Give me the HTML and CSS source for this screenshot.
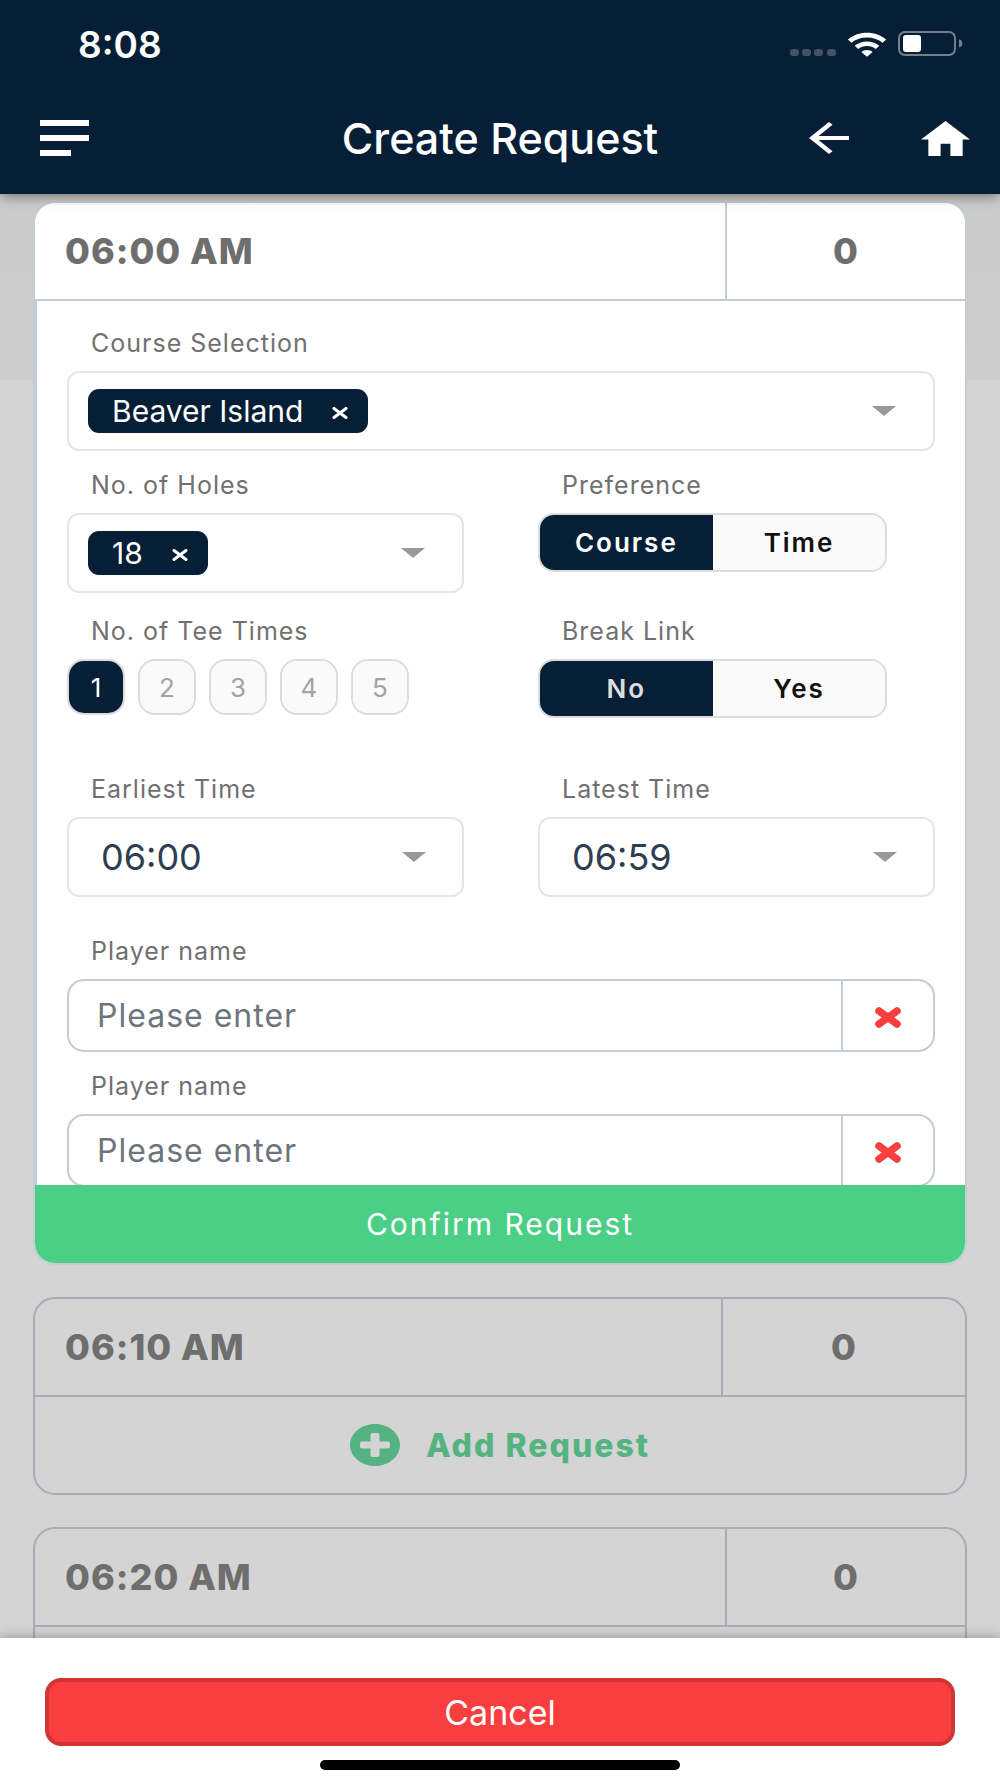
FILE: index.html
```html
<!DOCTYPE html>
<html lang="en">
<head>
<meta charset="utf-8">
<meta name="viewport" content="width=device-width, initial-scale=1">
<title>Create Request</title>
<link rel="stylesheet" href="styles.css">
</head>
<body>
<svg class="sprite" width="0" height="0" aria-hidden="true">
  <symbol id="caret" viewBox="0 0 24 10" preserveAspectRatio="none"><path d="M0 0h24L12 10z"/></symbol>
  <symbol id="times" viewBox="0 0 26 21"><path d="M4 4l18 13M22 4L4 17" fill="none" stroke="currentColor" stroke-width="7.500" stroke-linecap="round"/></symbol>
  <symbol id="cross" viewBox="0 0 16 12" preserveAspectRatio="none"><path d="M2 1.500l12 9M14 1.500l-12 9" fill="none" stroke="currentColor" stroke-width="3" stroke-linecap="round"/></symbol>
  <symbol id="plus" viewBox="0 0 50 42"><path fill-rule="evenodd" d="M25 0C38.800 0 50 9.400 50 21S38.800 42 25 42 0 32.600 0 21 11.200 0 25 0zM22.500 9q-2 0-2 2v6.500h-8.500q-2 0-2 2v3q0 2 2 2h8.500v6.500q0 2 2 2h5q2 0 2-2v-6.500h8.500q2 0 2-2v-3q0-2-2-2h-8.500v-6.500q0-2-2-2z"/></symbol>
</svg>

<header class="topbar">
  <div class="status">
    <span class="status__time">8:08</span>
    <div class="status__icons">
      <svg width="46" height="8" viewBox="0 0 46 8" fill="#435365"><rect width="9" height="7" rx="3"/><rect x="12" width="9" height="7" rx="3"/><rect x="24" width="9" height="7" rx="3"/><rect x="37" width="9" height="7" rx="3"/></svg>
      <svg width="40" height="25" viewBox="0 0 40 25" fill="#fff"><path d="M20 5.500c6.200 0 11.600 2 15.600 5.200l3.500-3.200C34.200 3.200 27.500.7 20 .7S5.800 3.200.9 7.500l3.500 3.200C8.400 7.500 13.800 5.500 20 5.500z"/><path d="M20 14c3.400 0 6.500 1.100 8.800 2.900l3.500-3.100C29.100 11.200 24.800 9.600 20 9.600s-9.100 1.600-12.300 4.200l3.500 3.100C13.500 15.100 16.600 14 20 14z"/><path d="M20 18c-2.200 0-4.200.7-5.600 2L20 24.700l5.600-4.700C24.200 18.700 22.200 18 20 18z"/></svg>
      <svg width="66" height="26" viewBox="0 0 66 26"><rect x="1" y="1" width="56" height="23" rx="6" fill="none" stroke="#73808d" stroke-width="2"/><rect x="5" y="4" width="18" height="17" rx="3" fill="#fff"/><path d="M61 8.500c2.700.5 3.300 2.300 3.300 4s-.6 3.500-3.300 4z" fill="#73808d"/></svg>
    </div>
  </div>
  <nav class="nav">
    <button class="icon-button icon-button--menu" type="button" aria-label="Menu">
      <svg width="49" height="36" viewBox="0 0 49 36" fill="#fff"><path d="M0 0h49v6H0zM0 15h49v6H0zM0 30h31v6H0z"/></svg>
    </button>
    <h1 class="nav__title">Create Request</h1>
    <div class="nav__actions">
      <button class="icon-button" type="button" aria-label="Back">
        <svg width="40" height="32" viewBox="4 4 16 16" preserveAspectRatio="none" fill="#fff"><path d="M20 11H7.830l5.590-5.590L12 4l-8 8 8 8 1.410-1.410L7.830 13H20v-2z"/></svg>
      </button>
      <a class="icon-button" href="#" aria-label="Home">
        <svg width="49" height="35" viewBox="2 3 20 17" preserveAspectRatio="none" fill="#fff"><path d="M10 20v-6h4v6h5v-8h3L12 3 2 12h3v8z"/></svg>
      </a>
    </div>
  </nav>
</header>

<main class="slots">
  <section class="slot slot--open">
    <div class="slot__head">
      <h2 class="slot__time">06:00 AM</h2>
      <span class="slot__count">0</span>
    </div>
    <form class="request">
      <div class="request__fields">
        <div class="field field--wide">
          <span class="field__label" id="course-label">Course Selection</span>
          <div class="select" role="group" aria-labelledby="course-label">
            <span class="chip">Beaver Island<button class="chip__remove" type="button" aria-label="Remove Beaver Island"><svg width="16" height="12"><use href="#cross"/></svg></button></span>
            <button class="select__toggle" type="button" aria-label="Show courses"><svg class="caret"><use href="#caret"/></svg></button>
          </div>
        </div>

        <div class="field">
          <span class="field__label" id="holes-label">No. of Holes</span>
          <div class="select" role="group" aria-labelledby="holes-label">
            <span class="chip">18<button class="chip__remove" type="button" aria-label="Remove 18"><svg width="16" height="12"><use href="#cross"/></svg></button></span>
            <button class="select__toggle" type="button" aria-label="Show holes"><svg class="caret"><use href="#caret"/></svg></button>
          </div>
        </div>
        <div class="field">
          <span class="field__label" id="pref-label">Preference</span>
          <div class="segmented" role="radiogroup" aria-labelledby="pref-label">
            <label class="segmented__item"><input type="radio" name="preference" checked><span>Course</span></label>
            <label class="segmented__item"><input type="radio" name="preference"><span>Time</span></label>
          </div>
        </div>

        <div class="field field--spaced">
          <span class="field__label" id="tee-label">No. of Tee Times</span>
          <div class="numbers" role="radiogroup" aria-labelledby="tee-label">
            <label class="numbers__item"><input type="radio" name="tee" checked><span>1</span></label>
            <label class="numbers__item"><input type="radio" name="tee"><span>2</span></label>
            <label class="numbers__item"><input type="radio" name="tee"><span>3</span></label>
            <label class="numbers__item"><input type="radio" name="tee"><span>4</span></label>
            <label class="numbers__item"><input type="radio" name="tee"><span>5</span></label>
          </div>
        </div>
        <div class="field field--spaced">
          <span class="field__label" id="break-label">Break Link</span>
          <div class="segmented" role="radiogroup" aria-labelledby="break-label">
            <label class="segmented__item segmented__item--muted"><input type="radio" name="break" checked><span>No</span></label>
            <label class="segmented__item"><input type="radio" name="break"><span>Yes</span></label>
          </div>
        </div>

        <div class="field field--times">
          <label class="field__label" for="earliest">Earliest Time</label>
          <div class="dropdown">
            <select class="dropdown__control" id="earliest"><option>06:00</option></select>
            <svg class="caret dropdown__caret"><use href="#caret"/></svg>
          </div>
        </div>
        <div class="field field--times">
          <label class="field__label" for="latest">Latest Time</label>
          <div class="dropdown">
            <select class="dropdown__control" id="latest"><option>06:59</option></select>
            <svg class="caret dropdown__caret"><use href="#caret"/></svg>
          </div>
        </div>

        <div class="field field--wide">
          <label class="field__label" for="player-1">Player name</label>
          <div class="player">
            <input class="player__input" id="player-1" type="text" placeholder="Please enter">
            <button class="player__remove" type="button" aria-label="Remove player"><svg width="26" height="21"><use href="#times"/></svg></button>
          </div>
        </div>
        <div class="field field--wide">
          <label class="field__label" for="player-2">Player name</label>
          <div class="player">
            <input class="player__input" id="player-2" type="text" placeholder="Please enter">
            <button class="player__remove" type="button" aria-label="Remove player"><svg width="26" height="21"><use href="#times"/></svg></button>
          </div>
        </div>
      </div>
      <button class="request__confirm" type="submit">Confirm Request</button>
    </form>
  </section>

  <section class="slot">
    <div class="slot__head">
      <h2 class="slot__time">06:10 AM</h2>
      <span class="slot__count slot__count--wide">0</span>
    </div>
    <button class="slot__add" type="button"><svg width="50" height="42"><use href="#plus"/></svg>Add Request</button>
  </section>

  <section class="slot">
    <div class="slot__head">
      <h2 class="slot__time">06:20 AM</h2>
      <span class="slot__count">0</span>
    </div>
    <div class="slot__rest"></div>
  </section>
</main>

<footer class="bottombar">
  <button class="bottombar__cancel" type="button">Cancel</button>
  <div class="home-indicator"></div>
</footer>
</body>
</html>
```
FILE: styles.css
```css
:root {
  --navy: #071f36;
  --line: #c5ccd4;
  --field-line: #e5e5e5;
  --label: #707070;
}

* {
  box-sizing: border-box;
}

body {
  display: flex;
  flex-direction: column;
  height: 100vh;
  margin: 0;
  background: #d4d4d4;
  font-family: Inter, "Liberation Sans", sans-serif;
}

button,
input,
select {
  margin: 0;
  font: inherit;
}

button {
  padding: 0;
  border: 0;
  background: none;
}

svg {
  display: block;
  flex: none;
}

.sprite {
  position: absolute;
}

/* Top bar */

.topbar {
  z-index: 1;
  flex: none;
  background: var(--navy);
  color: #fff;
  box-shadow: 0 2px 12px rgba(0, 0, 0, 0.45);
}

.status {
  display: flex;
  align-items: center;
  justify-content: space-between;
  height: 88px;
  padding: 0 36px 0 78px;
}

.status__time {
  font-size: 37px;
  font-weight: 600;
}

.status__icons {
  display: flex;
  align-items: flex-end;
  gap: 11px;
}

.nav {
  display: grid;
  grid-template-columns: 1fr auto 1fr;
  align-items: center;
  height: 106px;
  padding: 0 30px 6px;
}

.nav__title {
  margin: 0;
  font-size: 43px;
  font-weight: 500;
}

.nav__actions {
  display: flex;
  align-items: center;
  justify-content: flex-end;
  gap: 72px;
}

.icon-button {
  justify-self: start;
}

.icon-button--menu {
  padding-left: 10px;
}

/* Time slots */

.slots {
  display: flex;
  flex: 1;
  flex-direction: column;
  gap: 32px;
  min-height: 0;
  padding: 7px 33px 0;
  overflow: hidden;
  background: linear-gradient(#cbcbcb, #cdcdcd) top / 100% 186px no-repeat;
}

.slot {
  flex: none;
  overflow: hidden;
  border: 2px solid #a8adb3;
  border-radius: 22px;
}

.slot--open {
  border-color: var(--line);
  background: #fff;
}

.slot__head {
  display: flex;
  height: 98px;
  border-bottom: 2px solid #a8adb3;
  color: #6e6e6e;
  font-size: 36px;
  font-weight: 800;
  letter-spacing: 1px;
}

.slot__time {
  display: flex;
  flex: 1;
  align-items: center;
  margin: 0;
  padding-left: 30px;
  font: inherit;
}

.slot__count {
  display: flex;
  flex: 0 0 240px;
  align-items: center;
  justify-content: center;
  border-left: 2px solid #a8adb3;
}

.slot__count--wide {
  flex-basis: 244px;
}

.slot--open .slot__head,
.slot--open .slot__count {
  border-color: var(--line);
}

.slot__add {
  display: flex;
  align-items: center;
  justify-content: center;
  gap: 26px;
  width: 100%;
  height: 96px;
  color: #54b380;
  font-size: 32px;
  font-weight: 800;
  letter-spacing: 2px;
}

.slot__add svg {
  fill: currentColor;
}

.slot__rest {
  height: 96px;
}

/* Request form */

.request__fields {
  display: grid;
  grid-template-columns: 1fr 1fr;
  column-gap: 74px;
  row-gap: 20px;
  padding: 28px 30px 0;
  border-left: 2px solid var(--line);
}

.field--wide {
  grid-column: 1 / -1;
}

.field--spaced {
  padding: 4px 0 37px;
}

.field--times {
  padding-bottom: 20px;
}

.field__label {
  display: block;
  margin-bottom: 14px;
  padding-left: 24px;
  color: var(--label);
  font-size: 25px;
  line-height: 28px;
  letter-spacing: 1px;
}

.select {
  display: flex;
  align-items: center;
  justify-content: space-between;
  height: 80px;
  padding: 0 19px;
  border: 2px solid var(--field-line);
  border-radius: 12px;
}

.chip {
  display: flex;
  align-items: center;
  gap: 29px;
  height: 44px;
  padding: 0 20px 0 24px;
  border-radius: 11px;
  background: var(--navy);
  color: #fff;
  font-size: 30px;
}

.chip__remove {
  padding-top: 3px;
  color: #fff;
}

.select__toggle {
  padding: 20px 18px;
}

.caret {
  width: 24px;
  height: 10px;
  fill: #999;
}

.dropdown {
  display: grid;
  align-items: center;
}

.dropdown__control {
  grid-area: 1 / 1;
  height: 80px;
  padding: 0 32px;
  border: 2px solid var(--field-line);
  border-radius: 12px;
  appearance: none;
  background: #fff;
  color: #2c3e50;
  font-size: 36px;
}

.dropdown__caret {
  grid-area: 1 / 1;
  justify-self: end;
  margin-right: 38px;
  pointer-events: none;
}

.segmented {
  display: flex;
  width: 88%;
  height: 59px;
  overflow: hidden;
  border: 2px solid #dcdcdc;
  border-radius: 16px;
}

.segmented__item,
.numbers__item {
  display: grid;
  place-items: center;
}

.segmented__item {
  flex: 1;
  color: #111;
  font-size: 26px;
  font-weight: 600;
  letter-spacing: 2px;
}

.segmented__item input,
.numbers__item input {
  grid-area: 1 / 1;
  width: 100%;
  height: 100%;
  appearance: none;
  background: #fafafa;
}

.segmented__item span,
.numbers__item span {
  z-index: 1;
  grid-area: 1 / 1;
}

.segmented__item input:checked,
.numbers__item input:checked {
  background: var(--navy);
}

.segmented__item input:checked + span,
.numbers__item input:checked + span {
  color: #fff;
}

.segmented__item--muted input:checked + span {
  color: #ddd;
}

.numbers {
  display: flex;
  gap: 13px;
}

.numbers__item {
  width: 58px;
  height: 56px;
  overflow: hidden;
  border: 2px solid #dcdcdc;
  border-radius: 17px;
  color: #a3a3a3;
  font-size: 26px;
}

.player {
  display: flex;
  height: 73px;
  border: 2px solid var(--line);
  border-radius: 17px;
}

.player__input {
  flex: 1;
  min-width: 0;
  padding: 0 28px;
  border: 0;
  background: none;
  font-size: 32px;
  letter-spacing: 1px;
}

.player__input::placeholder {
  color: #6c757d;
  opacity: 1;
}

.player__remove {
  display: flex;
  flex: 0 0 92px;
  align-items: center;
  justify-content: center;
  border-left: 2px solid var(--line);
  color: #f83e3e;
}

.player__remove svg {
  margin-top: 4px;
}

/* Overlaps the bottom edge of the last field */
.request__confirm {
  position: relative;
  display: block;
  width: 100%;
  height: 78px;
  margin-top: -2px;
  background: #4bcf87;
  color: #fff;
  font-size: 30px;
  letter-spacing: 2px;
}

/* Bottom bar */

.bottombar {
  z-index: 1;
  display: flex;
  flex: none;
  flex-direction: column;
  align-items: center;
  gap: 14px;
  padding: 40px 45px 8px;
  background: #fff;
  box-shadow: 0 -2px 10px rgba(0, 0, 0, 0.25);
}

.bottombar__cancel {
  width: 100%;
  height: 68px;
  border: 4px solid #d33535;
  border-radius: 16px;
  background: #f83e3e;
  color: #fff;
  font-size: 34px;
}

.home-indicator {
  width: 360px;
  height: 10px;
  border-radius: 5px;
  background: #000;
}
```
